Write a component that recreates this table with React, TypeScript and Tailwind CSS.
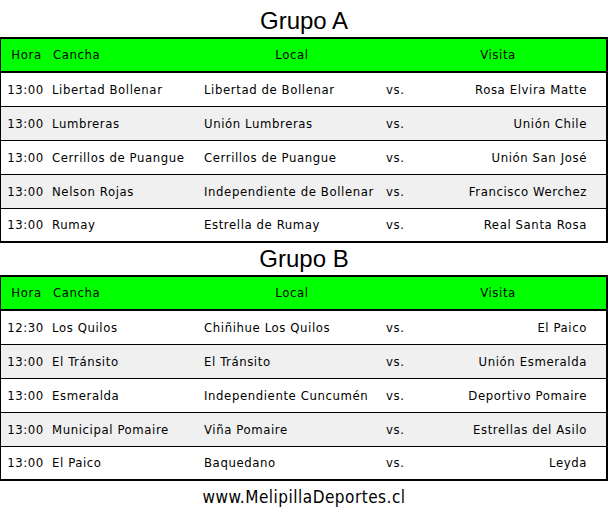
const grupos = [
  {
    nombre: "Grupo A",
    partidos: [
      ["13:00", "Libertad Bollenar", "Libertad de Bollenar", "Rosa Elvira Matte"],
      ["13:00", "Lumbreras", "Unión Lumbreras", "Unión Chile"],
      ["13:00", "Cerrillos de Puangue", "Cerrillos de Puangue", "Unión San José"],
      ["13:00", "Nelson Rojas", "Independiente de Bollenar", "Francisco Werchez"],
      ["13:00", "Rumay", "Estrella de Rumay", "Real Santa Rosa"],
    ],
  },
  {
    nombre: "Grupo B",
    partidos: [
      ["12:30", "Los Quilos", "Chiñihue Los Quilos", "El Paico"],
      ["13:00", "El Tránsito", "El Tránsito", "Unión Esmeralda"],
      ["13:00", "Esmeralda", "Independiente Cuncumén", "Deportivo Pomaire"],
      ["13:00", "Municipal Pomaire", "Viña Pomaire", "Estrellas del Asilo"],
      ["13:00", "El Paico", "Baquedano", "Leyda"],
    ],
  },
];

const body = { fontFamily: '"DejaVu Sans Condensed", "DejaVu Sans", sans-serif' };

const Tabla = ({ partidos }: { partidos: string[][] }) => (
  <div
    className="border-t-2 border-b-2 border-l border-r-2 border-black text-[13px] tracking-[0.6px] text-black"
    style={body}
  >
    <div className="grid grid-cols-[51px_150px_180px_1fr] items-center h-[34px] bg-[#00ff00] border-b-2 border-black">
      <div className="text-center">Hora</div>
      <div className="pl-[1px]">Cancha</div>
      <div className="text-center">Local</div>
      <div className="text-center pl-[8px]">Visita</div>
    </div>
    {partidos.map((p, i) => (
      <div
        key={i}
        className={`grid grid-cols-[51px_150px_181px_40px_1fr] items-center ${
          i < partidos.length - 1 ? "h-[34px] border-b border-black" : "h-[32px]"
        } ${i % 2 === 1 ? "bg-[#f0f0f0]" : "bg-white"}`}
      >
        <div className="text-center pr-[2px]">{p[0]}</div>
        <div>{p[1]}</div>
        <div className="pl-[2px]">{p[2]}</div>
        <div className="pl-[3px]">vs.</div>
        <div className="text-right pr-[19px]">{p[3]}</div>
      </div>
    ))}
  </div>
);

export default function App() {
  return (
    <div className="w-[608px] h-[516px] bg-white pt-[5px]">
      {grupos.map((g) => (
        <div key={g.nombre}>
          <h2
            className="h-[32px] flex items-center justify-center text-[24px] text-black"
            style={{ fontFamily: '"Liberation Sans", Arial, sans-serif' }}
          >
            {g.nombre}
          </h2>
          <Tabla partidos={g.partidos} />
        </div>
      ))}
      <div
        className="h-[34px] flex items-center justify-center text-[17px] tracking-[0.5px] text-black"
        style={body}
      >
        www.MelipillaDeportes.cl
      </div>
    </div>
  );
}
